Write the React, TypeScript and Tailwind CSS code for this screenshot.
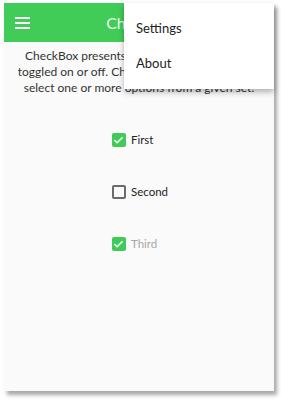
import { Check } from 'lucide-react'

const items = [
  { label: 'First', checked: true, disabled: false },
  { label: 'Second', checked: false, disabled: false },
  { label: 'Third', checked: true, disabled: true },
]

function Box({ checked }: { checked: boolean }) {
  if (checked) {
    return (
      <span className="flex h-[14px] w-[14px] items-center justify-center rounded-[2px] bg-[#3fcb55]">
        <Check className="h-[11px] w-[11px] text-white" strokeWidth={3.5} />
      </span>
    )
  }
  return <span className="h-[14px] w-[14px] rounded-[2px] border-2 border-[#6b6b6b]" />
}

export default function App() {
  return (
    <div className="h-[401px] w-[281px] bg-white pl-[4px] pt-[3px] font-['Lato',sans-serif]">
      <div className="relative h-[388px] w-[270px] bg-[#fafafa] shadow-[3px_4px_4px_rgba(0,0,0,0.35)]">
        <header className="relative flex h-[39px] items-center bg-[#40cc57] px-[11px]">
          <div className="flex w-[15px] flex-col gap-[3px]">
            <span className="h-[2px] bg-white" />
            <span className="h-[2px] bg-white" />
            <span className="h-[2px] bg-white" />
          </div>
          <h1 className="absolute inset-x-0 pl-[5px] text-center text-[16px] text-[#eefbef]">CheckBox</h1>
        </header>

        <p className="px-[4px] pt-[6px] text-center text-[12px] leading-[16px] text-[#333]">
          CheckBox presents a check box that can be
          <br />
          toggled on or off. CheckBox allows the user to
          <br />
          select one or more options from a given set.
        </p>

        <div className="mt-[37px] flex flex-col items-center">
          <div className="flex flex-col gap-[38px] pl-[2px]">
            {items.map((item) => (
              <label key={item.label} className="flex h-[14px] items-center gap-[5px]">
                <Box checked={item.checked} />
                <span className={`text-[11.5px] ${item.disabled ? 'text-[#a6a6a6]' : 'text-[#222]'}`}>
                  {item.label}
                </span>
              </label>
            ))}
          </div>
        </div>

        <div className="absolute right-0 top-0 w-[150px] bg-white py-[8px] shadow-[0_3px_6px_rgba(0,0,0,0.3)]">
          <div className="flex h-[35px] items-center px-[12px] text-[13px] text-[#222]">Settings</div>
          <div className="flex h-[35px] items-center px-[12px] text-[13px] text-[#222]">About</div>
        </div>
      </div>
    </div>
  )
}
